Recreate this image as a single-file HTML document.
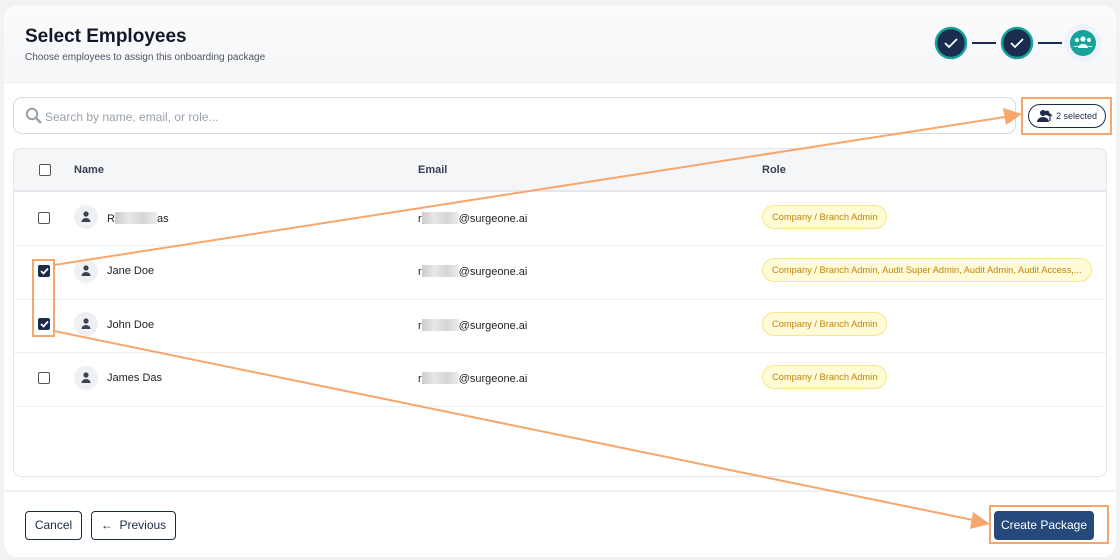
<!DOCTYPE html>
<html><head><meta charset="utf-8"><style>
*{box-sizing:border-box;margin:0;padding:0}
body{width:1120px;height:560px;background:#f1f2f4;font-family:"Liberation Sans",sans-serif;position:relative;overflow:hidden;color:#1f2937}
.card{position:absolute;left:4px;top:5px;width:1112px;height:552px;background:#fff;border-radius:14px;overflow:hidden}
.hdr{position:absolute;left:0;top:0;width:1112px;height:78px;background:linear-gradient(#fbfbfc,#f6f7f9);border-bottom:1px solid #eceef1}
.a{position:absolute}
.search{left:13px;top:97px;width:1003px;height:37px;border:1px solid #d6d9de;border-radius:9px;background:#fff}
.tbl{left:13px;top:148px;width:1094px;height:329px;border:1px solid #e3e5e8;border-radius:8px;overflow:hidden}
.th{position:absolute;left:0;top:0;width:100%;height:43px;background:#f5f6f8;border-bottom:2px solid #e6e7ea}
.row{position:absolute;left:0;width:100%;height:54px;border-bottom:1px solid #eef0f2}
.cb{position:absolute;width:12px;height:12px;border:1.3px solid #555;border-radius:2px;background:#fff}
.cbk{background:#1c2b4a;border-color:#1c2b4a}
.av{position:absolute;left:60px;width:24px;height:24px;border-radius:50%;background:#eef0f3}
.txt{position:absolute;font-size:11px;color:#222}
.blur{display:inline-block;width:37px;height:12px;background:linear-gradient(90deg,#ccc,#e8e8e8,#d4d4d4,#ededed);vertical-align:-2px}
.pill{position:absolute;left:748px;height:24px;border:1px solid #fbe48a;background:#fffbd6;border-radius:12px;font-size:9.3px;color:#c2830a;padding:6px 9px;white-space:nowrap}
.btn{position:absolute;height:29px;border:1px solid #1c2b4a;border-radius:4px;font-size:12px;color:#1c2b4a;text-align:center;line-height:27px;background:#fff}
</style></head><body>
<div class="card">
<div class="hdr"></div>
<div class="a" style="left:21px;top:21px;font-size:19px;font-weight:bold;color:#111827">Select Employees</div>
<div class="a" style="left:21px;top:47px;font-size:10px;color:#4b5563">Choose employees to assign this onboarding package</div>
<svg class="a" style="left:928px;top:19px" width="180" height="50">
<circle cx="19" cy="19" r="15" fill="#1b2c4e" stroke="#16a39a" stroke-width="2.5"/>
<path d="M13 19l4 4 8-8" stroke="#fff" stroke-width="1.8" fill="none"/>
<line x1="40" y1="19" x2="64" y2="19" stroke="#1b2c4e" stroke-width="2"/>
<circle cx="85" cy="19" r="15" fill="#1b2c4e" stroke="#16a39a" stroke-width="2.5"/>
<path d="M79 19l4 4 8-8" stroke="#fff" stroke-width="1.8" fill="none"/>
<line x1="106" y1="19" x2="130" y2="19" stroke="#1b2c4e" stroke-width="2"/>
<circle cx="151" cy="19" r="19" fill="#eef3fb"/>
<circle cx="151" cy="19" r="13" fill="#16a39a"/>
<circle cx="151" cy="15" r="2.6" fill="#fff"/><circle cx="145" cy="16" r="2" fill="#fff"/><circle cx="157" cy="16" r="2" fill="#fff"/>
<path d="M146 24a5 4 0 0 1 10 0zM141 23a4 3 0 0 1 6 0zM155 23a4 3 0 0 1 6 0z" fill="#fff"/>
</svg>
</div>
<div class="a search">
<svg class="a" style="left:11px;top:9px" width="18" height="18"><circle cx="7" cy="7" r="5.2" stroke="#9aa1ab" stroke-width="2" fill="none"/><line x1="11" y1="11" x2="16" y2="16" stroke="#9aa1ab" stroke-width="2.4"/></svg>
<div class="a" style="left:31px;top:12px;font-size:12px;color:#9aa1ab">Search by name, email, or role...</div>
</div>
<div class="a" style="left:1028px;top:104px;width:78px;height:24px;border:1.3px solid #1c2b4a;border-radius:12px;font-size:9px;color:#1c2b4a;padding:6px 0 0 27px">2 selected</div>
<svg class="a" style="left:1037px;top:109px" width="16" height="14"><circle cx="6" cy="4" r="3" fill="#1c2b4a"/><path d="M0 13a6 5 0 0 1 12 0z" fill="#1c2b4a"/><circle cx="10" cy="4" r="2.4" fill="#1c2b4a"/><path d="M13 5v7M11 7l2-2 2 2" stroke="#1c2b4a" stroke-width="1.2" fill="none"/></svg>
<div class="a tbl">
<div class="th"></div>
<div class="cb" style="left:25px;top:15px"></div>
<div class="txt" style="left:60px;top:15px;font-weight:bold;color:#374151">Name</div>
<div class="txt" style="left:404px;top:15px;font-weight:bold;color:#374151">Email</div>
<div class="txt" style="left:748px;top:15px;font-weight:bold;color:#374151">Role</div>
<div class="row" style="top:43px"></div>
<div class="row" style="top:97px"></div>
<div class="row" style="top:150px"></div>
<div class="row" style="top:204px"></div>
</div>
<div class="cb a" style="left:38px;top:212px"></div>
<div class="av" style="left:74px;top:205px"></div>
<div class="txt" style="left:107px;top:212px">R<span class="blur" style="width:42px"></span>as</div>
<div class="txt" style="left:418px;top:212px">r<span class="blur"></span>@surgeone.ai</div>
<div class="pill" style="left:762px;top:205px">Company / Branch Admin</div>

<div class="cb cbk a" style="left:38px;top:265px"></div>
<div class="av" style="left:74px;top:259px"></div>
<div class="txt" style="left:107px;top:265px">Jane Doe</div>
<div class="txt" style="left:418px;top:265px">r<span class="blur"></span>@surgeone.ai</div>
<div class="pill" style="left:762px;top:258px">Company / Branch Admin, Audit Super Admin, Audit Admin, Audit Access,...</div>

<div class="cb cbk a" style="left:38px;top:318px"></div>
<div class="av" style="left:74px;top:312px"></div>
<div class="txt" style="left:107px;top:319px">John Doe</div>
<div class="txt" style="left:418px;top:319px">r<span class="blur"></span>@surgeone.ai</div>
<div class="pill" style="left:762px;top:312px">Company / Branch Admin</div>

<div class="cb a" style="left:38px;top:372px"></div>
<div class="av" style="left:74px;top:366px"></div>
<div class="txt" style="left:107px;top:372px">James Das</div>
<div class="txt" style="left:418px;top:372px">r<span class="blur"></span>@surgeone.ai</div>
<div class="pill" style="left:762px;top:365px">Company / Branch Admin</div>

<svg class="a" style="left:0;top:0" width="1120" height="560">
<g fill="#3b4452">
<circle cx="86" cy="214" r="2.6"/><path d="M81.5 222a4.5 4 0 0 1 9 0z"/>
<circle cx="86" cy="268" r="2.6"/><path d="M81.5 276a4.5 4 0 0 1 9 0z"/>
<circle cx="86" cy="321" r="2.6"/><path d="M81.5 329a4.5 4 0 0 1 9 0z"/>
<circle cx="86" cy="375" r="2.6"/><path d="M81.5 383a4.5 4 0 0 1 9 0z"/>
</g>
<g stroke="#fff" stroke-width="1.8" fill="none"><path d="M41 271l2.5 2.5 4.5-5"/><path d="M41 324l2.5 2.5 4.5-5"/></g>
</svg>
<div class="a" style="left:4px;top:490px;width:1112px;height:2px;background:#eef0f2"></div>
<div class="btn" style="left:25px;top:511px;width:57px">Cancel</div>
<div class="btn" style="left:91px;top:511px;width:85px">&#8592;&nbsp; Previous</div>
<div class="btn" style="left:994px;top:511px;width:100px;background:#26497c;border-color:#26497c;color:#fff">Create Package</div>
<svg class="a" style="left:0;top:0" width="1120" height="560" fill="none" stroke="#f7a66c" stroke-width="2">
<rect x="1022" y="98" width="89" height="36"/>
<rect x="33" y="260" width="21" height="76"/>
<rect x="990" y="506" width="118" height="37"/>
<line x1="54" y1="265" x2="1005" y2="117"/>
<path d="M1022 114l-19-6 3 17z" fill="#f7a66c" stroke="none"/>
<line x1="54" y1="331" x2="973" y2="520"/>
<path d="M990 524l-17-12-3 17z" fill="#f7a66c" stroke="none"/>
</svg>
</body></html>
